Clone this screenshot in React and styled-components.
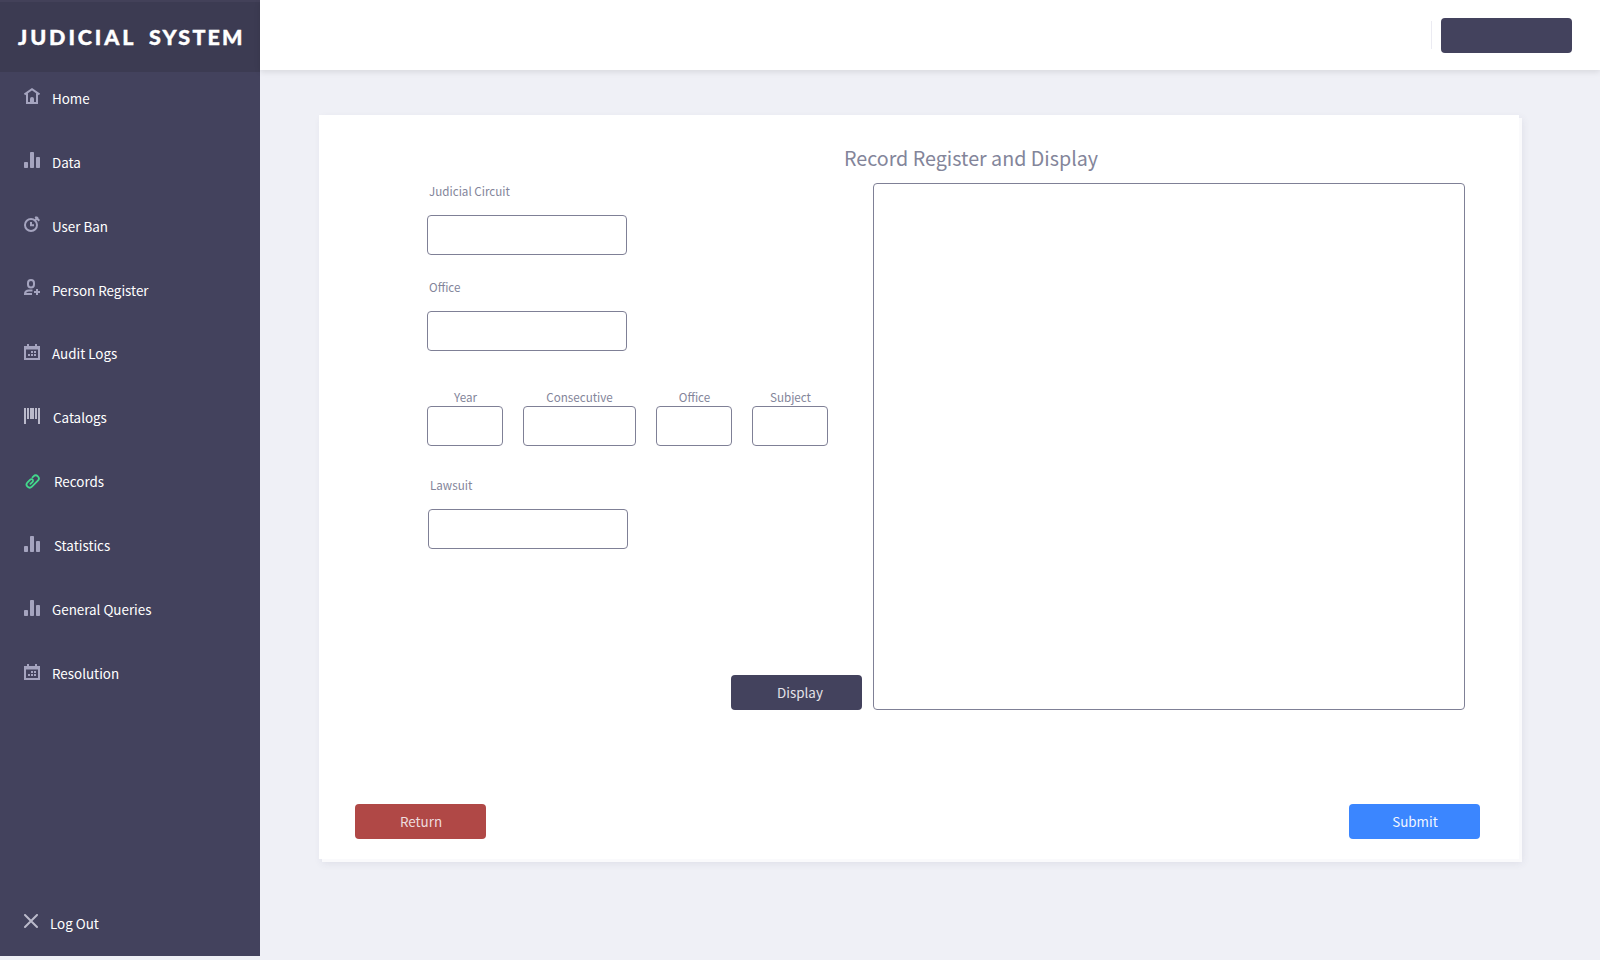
import React from "react";
import styled, { createGlobalStyle } from "styled-components";

const GlobalStyle = createGlobalStyle`
  * { box-sizing: border-box; }
  body { margin: 0; background: #eff0f6; font-family: "Noto Sans CJK SC", "Noto Sans", sans-serif; }
`;

const Page = styled.div`
  display: flex;
  width: 1600px;
  height: 960px;
  overflow: hidden;
  background: #eff0f6;
`;

const Sidebar = styled.aside`
  display: flex;
  flex-direction: column;
  flex: none;
  width: 260px;
  height: 956px;
  background: #43425d;
`;

const Brand = styled.div`
  display: flex;
  flex: none;
  gap: 12.5px;
  height: 72px;
  padding: 22px 0 0 18px;
  border-top: 2px solid #434159;
  background: #3c3b52;
  color: #fff;
  font: 900 21.5px/26px Lato, sans-serif;
  -webkit-text-stroke: 0.4px #fff;
  white-space: nowrap;
`;

const BrandWord = styled.span`
  letter-spacing: ${(p) => p.$track}px;
`;

const Nav = styled.nav`
  display: flex;
  flex-direction: column;
`;

const NavItem = styled.a`
  display: flex;
  align-items: flex-start;
  height: 64px;
  padding: 16px 0 0 24px;
`;

const NavIcon = styled.svg`
  flex: none;
  width: 16px;
  height: 16px;
  margin-top: ${(p) => p.$dy || 0}px;
  color: ${(p) => p.$color || "#a5a4bf"};
`;

const NavLabel = styled.span`
  margin: ${(p) => p.$dy || 0}px 0 0 ${(p) => p.$gap || 12}px;
  color: #fff;
  font-size: 13.4px;
  line-height: 20px;
  white-space: nowrap;
`;

const LogOut = styled(NavItem)`
  height: 59px;
  margin-top: auto;
`;

const Main = styled.main`
  display: flex;
  flex-direction: column;
  flex: 1;
`;

const TopBar = styled.header`
  display: flex;
  flex: none;
  justify-content: flex-end;
  height: 70px;
  padding: 18px 28px 0 0;
  background: #fff;
  box-shadow: 0 2px 6px rgba(0, 0, 0, 0.1);
`;

const Divider = styled.div`
  width: 1px;
  height: 28px;
  margin: 3px 9px 0 0;
  background: #ebebf2;
`;

const Button = styled.button`
  width: 131px;
  height: 35px;
  padding: 0 0 0 ${(p) => p.$shift || 0}px;
  border: 0;
  border-radius: 4px;
  background: ${(p) => p.$bg || "#43425d"};
  color: ${(p) => p.$fg || "#e3e2e8"};
  font-family: inherit;
  font-size: 13.4px;
  line-height: 35px;
`;

const Card = styled.section`
  display: flex;
  flex-direction: column;
  width: 1200px;
  height: 744px;
  margin: 45px 0 0 59px;
  padding: 28px 39px 20px 36px;
  background: #fff;
  box-shadow: 3px 3px 0 #fafafc, 3px 4px 8px rgba(60, 60, 100, 0.1);
`;

const Title = styled.h1`
  margin: 0 0 10px 489px;
  color: #83859a;
  font-size: 19.7px;
  font-weight: 400;
  line-height: 30px;
`;

const Body = styled.div`
  display: flex;
  height: 527px;
  margin-left: 72px;
`;

const Form = styled.form`
  display: flex;
  flex-direction: column;
  width: 435px;
`;

const Field = styled.div`
  display: flex;
  flex-direction: column;
  gap: 16px;
  margin: 0 0 ${(p) => p.$after || 0}px ${(p) => p.$left || 0}px;
`;

const Label = styled.label`
  padding-left: 2px;
  color: #83859a;
  font-size: 11.65px;
  line-height: 16px;
`;

const SmallLabel = styled(Label)`
  padding-left: ${(p) => p.$shift || 0}px;
`;

const Input = styled.input`
  width: ${(p) => p.$w || 200}px;
  height: 40px;
  padding: 0 8px;
  border: 1px solid #7f8096;
  border-radius: 4px;
  outline: none;
  background: #fff;
`;

const FieldRow = styled.div`
  display: flex;
  gap: 20px;
  margin: 0 0 31px;
`;

const SmallField = styled.div`
  display: flex;
  flex-direction: column;
  align-items: center;
  gap: 1px;
`;

const Viewer = styled.div`
  width: 592px;
  height: 527px;
  margin-left: 11px;
  border: 1px solid #7f8096;
  border-radius: 4px;
`;

const FormAction = styled.div`
  display: flex;
  justify-content: flex-end;
  margin-top: auto;
`;

const Footer = styled.footer`
  display: flex;
  justify-content: space-between;
  margin-top: auto;
`;

const Bars = () => (
  <g fill="currentColor">
    <rect x="0" y="10" width="4" height="6" rx="0.8" />
    <rect x="6" y="0" width="4" height="16" rx="0.8" />
    <rect x="12" y="5" width="4" height="11" rx="0.8" />
  </g>
);

const House = () => (
  <g fill="none" stroke="currentColor" strokeWidth="2">
    <path d="M0.5 6.4 8 1.200l7.500 5.200M3 5.500V15h10V5.500" />
    <path d="M6 15v-4a2 2 0 0 1 4 0v4z" fill="currentColor" stroke="none" />
  </g>
);

const Clock = () => (
  <g fill="none" stroke="currentColor" strokeWidth="2">
    <circle cx="7" cy="9" r="6" />
    <path d="M7 6v3.200h3M11.300 0.700l4 4M11 4.200l3-3" />
  </g>
);

const Person = () => (
  <g fill="none" stroke="currentColor" strokeWidth="2">
    <rect x="4" y="1" width="6" height="7.500" rx="3" />
    <path d="M8.500 11.500H5C2.500 11.500 1 13 1 15h7M13 10v6M10 13h6" />
  </g>
);

const Calendar = () => (
  <g fill="currentColor">
    <path fillRule="evenodd" d="M0 2h3V0h2v2h6V0h2v2h3v14H0zM2 5.600v8.400h12V5.600z" />
    <path d="M7 7h2v2H7zM10 7h2v2h-2zM4 10h2v2H4zM7 10h2v2H7zM10 10h2v2h-2z" />
  </g>
);

const Barcode = () => (
  <path fill="currentColor" d="M0 0h2v16H0zM3 0h2v11H3zM6 0h4v11H6zM11 0h2v11h-2zM14 0h2v16h-2z" />
);

const Link = () => (
  <path
    fill="none"
    stroke="currentColor"
    strokeWidth="1.800"
    strokeLinecap="round"
    transform="translate(8.700 8.500) rotate(-45)"
    d="M2.800 -3.100H4.200A3.100 3.100 0 0 1 4.200 3.100H-4.200A3.100 3.100 0 0 1 -4.200 -3.100H-0.300A1.600 1.600 0 0 1 -0.300 0.100H-3.300"
  />
);

const Cross = () => (
  <path fill="none" stroke="currentColor" strokeWidth="2" strokeLinecap="round" d="M1 1l12 12M13 1L1 13" />
);

const items = [
  { label: "Home", Icon: House },
  { label: "Data", Icon: Bars },
  { label: "User Ban", Icon: Clock },
  { label: "Person Register", Icon: Person, iconDy: -1 },
  { label: "Audit Logs", Icon: Calendar, dy: -1 },
  { label: "Catalogs", Icon: Barcode, color: "#bbbacb", gap: 13, dy: -1 },
  { label: "Records", Icon: Link, color: "#43d98c", gap: 14, iconDy: 1, dy: -1 },
  { label: "Statistics", Icon: Bars, gap: 14, dy: -1 },
  { label: "General Queries", Icon: Bars, dy: -1 },
  { label: "Resolution", Icon: Calendar, dy: -1 },
];

const codes = [
  { label: "Year", w: 76, shift: 1 },
  { label: "Consecutive", w: 113 },
  { label: "Office", w: 76, shift: 1 },
  { label: "Subject", w: 76, shift: 1 },
];

export default function App() {
  return (
    <Page>
      <GlobalStyle />
      <Sidebar>
        <Brand>
          <BrandWord $track={2.9}>JUDICIAL</BrandWord>
          <BrandWord $track={2.200}>SYSTEM</BrandWord>
        </Brand>
        <Nav>
          {items.map(({ label, Icon, color, gap, iconDy, dy }) => (
            <NavItem key={label}>
              <NavIcon viewBox="0 0 16 16" $color={color} $dy={iconDy}><Icon /></NavIcon>
              <NavLabel $gap={gap} $dy={dy}>{label}</NavLabel>
            </NavItem>
          ))}
        </Nav>
        <LogOut>
          <NavIcon viewBox="0 0 16 16" $color="#bbbacb" $dy={1}><Cross /></NavIcon>
          <NavLabel $gap={10}>Log Out</NavLabel>
        </LogOut>
      </Sidebar>
      <Main>
        <TopBar>
          <Divider />
          <Button aria-label="Account" />
        </TopBar>
        <Card>
          <Title>Record Register and Display</Title>
          <Body>
            <Form>
              <Field $after={24}><Label>Judicial Circuit</Label><Input /></Field>
              <Field $after={38}><Label>Office</Label><Input /></Field>
              <FieldRow>
                {codes.map(({ label, w, shift }) => (
                  <SmallField key={label}><SmallLabel $shift={shift}>{label}</SmallLabel><Input $w={w} /></SmallField>
                ))}
              </FieldRow>
              <Field $left={1}><Label>Lawsuit</Label><Input /></Field>
              <FormAction><Button type="button" $shift={7}>Display</Button></FormAction>
            </Form>
            <Viewer />
          </Body>
          <Footer>
            <Button $bg="#b04846" $fg="#eedcdf" $shift={1}>Return</Button>
            <Button $bg="#3b86ff" $fg="#f1f6ff" $shift={1}>Submit</Button>
          </Footer>
        </Card>
      </Main>
    </Page>
  );
}
